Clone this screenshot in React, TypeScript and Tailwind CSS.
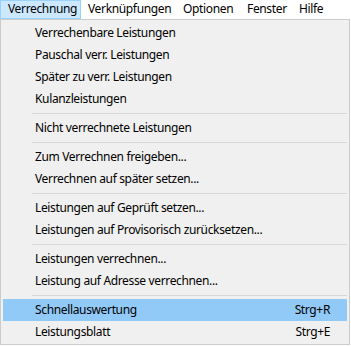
import React from 'react';

type Entry = { label: string; shortcut?: string; active?: boolean } | 'sep';

const topMenus = [
  { label: 'Verrechnung', w: 'w-[81px]' },
  { label: 'Verknüpfungen', w: 'w-[95px]' },
  { label: 'Optionen', w: 'w-[64px]' },
  { label: 'Fenster', w: 'w-[52px]' },
  { label: 'Hilfe', w: 'w-[50px]' },
];

const entries: Entry[] = [
  { label: 'Verrechenbare Leistungen' },
  { label: 'Pauschal verr. Leistungen' },
  { label: 'Später zu verr. Leistungen' },
  { label: 'Kulanzleistungen' },
  'sep',
  { label: 'Nicht verrechnete Leistungen' },
  'sep',
  { label: 'Zum Verrechnen freigeben...' },
  { label: 'Verrechnen auf später setzen...' },
  'sep',
  { label: 'Leistungen auf Geprüft setzen...' },
  { label: 'Leistungen auf Provisorisch zurücksetzen...' },
  'sep',
  { label: 'Leistungen verrechnen...' },
  { label: 'Leistung auf Adresse verrechnen...' },
  'sep',
  { label: 'Schnellauswertung', shortcut: 'Strg+R', active: true },
  { label: 'Leistungsblatt', shortcut: 'Strg+E' },
];

export default function App() {
  return (
    <div
      className="w-[351px] h-[346px] bg-white text-[12px] tracking-[-0.35px] text-black overflow-hidden"
      style={{ fontFamily: '"Noto Sans", "Open Sans", sans-serif' }}
    >
      {/* menu bar */}
      <div className="flex h-[19px] items-stretch">
        {topMenus.map((m, i) => (
          <div
            key={m.label}
            className={`${m.w} shrink-0 flex items-center pl-[7px] pb-px leading-none whitespace-nowrap ${
              i === 0 ? 'bg-[#cce8ff] border border-[#99d1ff] pl-[6px]' : ''
            }`}
          >
            {m.label}
          </div>
        ))}
      </div>

      {/* dropdown */}
      <div className="w-[350px] h-[326px] border border-[#cccccc] bg-[#f0f0f0] pt-[2px] px-[2px]">
        {entries.map((e, i) =>
          e === 'sep' ? (
            <div key={i} className="h-[7px] flex items-center pl-[29px]">
              <div className="h-px w-full bg-[#d7d7d7]" />
            </div>
          ) : (
            <div
              key={i}
              className={`h-[22px] flex items-center pl-[32px] pr-[17px] ${
                e.active ? 'bg-[#91c9f7]' : ''
              }`}
            >
              <span className="flex-1">{e.label}</span>
              {e.shortcut && <span>{e.shortcut}</span>}
            </div>
          )
        )}
      </div>
    </div>
  );
}
